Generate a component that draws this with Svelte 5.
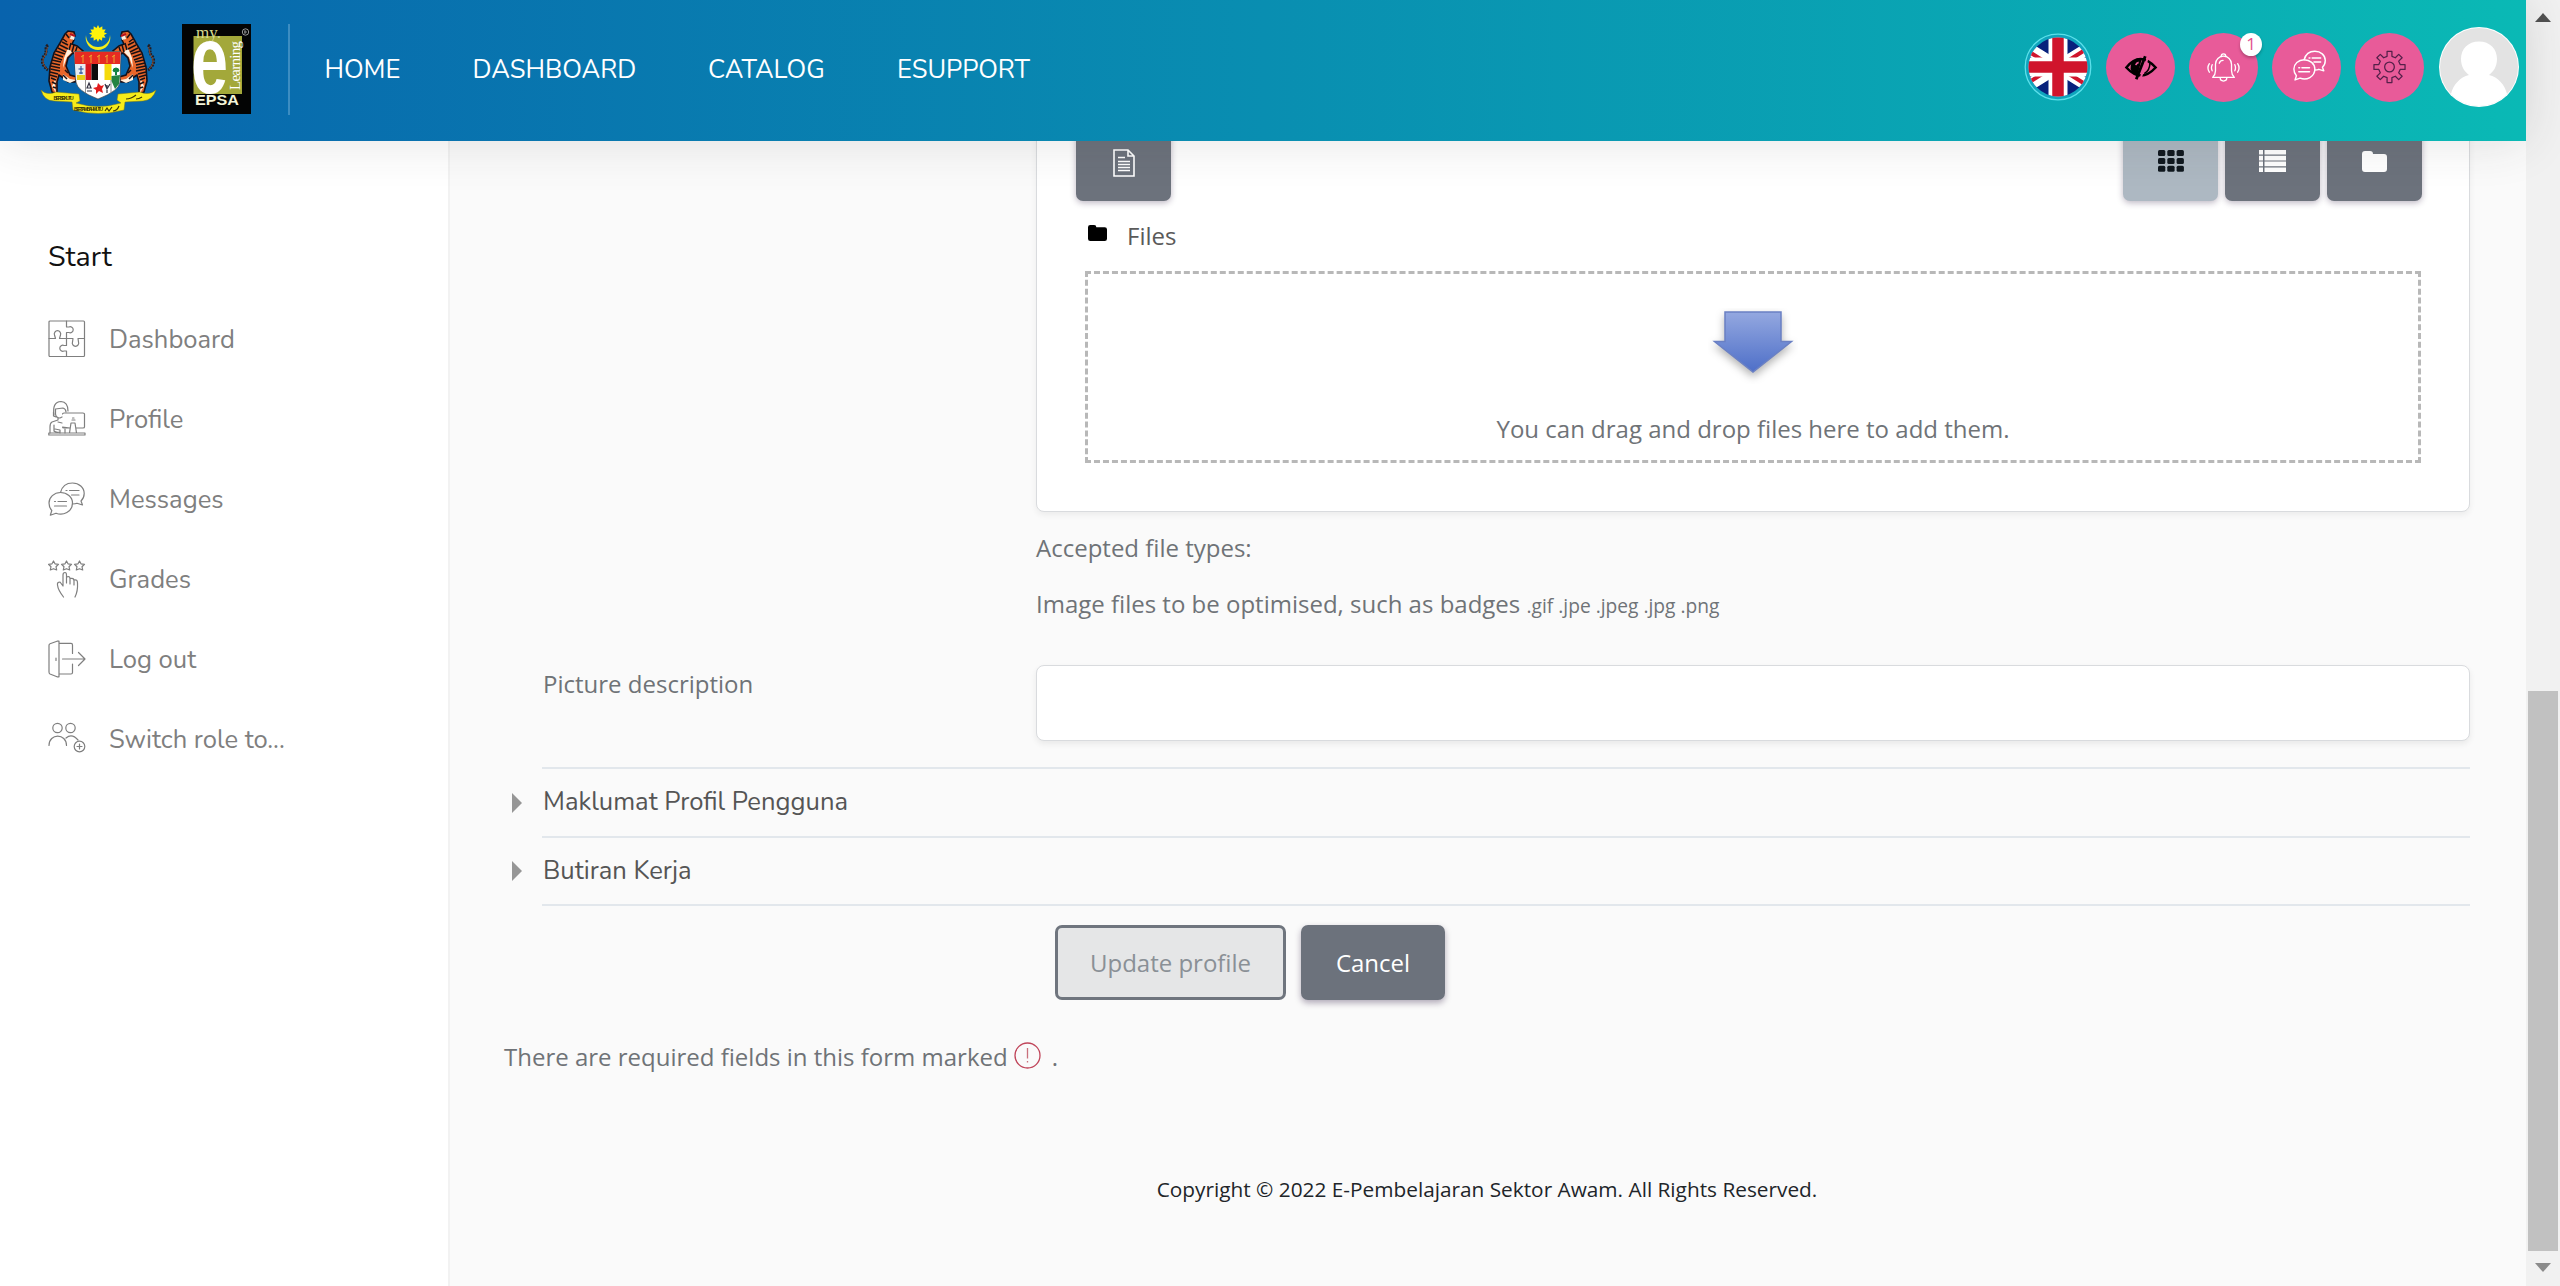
<script>
  const nav = [
    { label: 'HOME', cls: 'home' },
    { label: 'DASHBOARD', cls: 'dash' },
    { label: 'CATALOG', cls: 'cat' },
    { label: 'ESUPPORT', cls: 'esup' }
  ];
  const menu = ['Dashboard', 'Profile', 'Messages', 'Grades', 'Log out', 'Switch role to...'];
  const sections = ['Maklumat Profil Pengguna', 'Butiran Kerja'];
  const cells = [0, 1, 2, 3, 4, 5, 6, 7, 8];
</script>

{#snippet chat()}
  <path d="M12.5 10.5C14 4.500 18.500 1 24.500 1C31 1 36.200 5.500 36.200 11.500C36.200 15 34.800 17.300 33 19L34.500 23L29 21.300C27.500 22 26 22 24.500 22" />
  <path d="M12.500 10.500C6 10.500 1 15.500 1 21C1 24.500 2.300 26.800 3.800 28.500L2.300 33.200L8 31.200C15 34 24.500 30 24.500 21C24.500 15 19 10.500 12.500 10.500Z" />
  <path d="M21.500 8.500H31M18 8.500H19M23.500 13H31M10 19.500H18.500M6.500 19.500H7.500M6.500 24H18.500" />
{/snippet}

<div class="page">
  <div class="view">
    <header>
      <svg class="arms" viewBox="0 0 117 90" width="117" height="90">
        <path d="M46 11A12.300 12.300 0 1 0 70 11A11 11 0 1 1 46 11Z" fill="#f4ee18" />
        <path d="M58 1L59.500 4L62.300 2.200L62.400 5.400L65.700 5.400L64 8.200L67 9.500L64 11L65.500 13.800L62.300 13.600L62 16.700L59.300 15L58 18L56.500 15L53.700 16.700L53.500 13.600L50.300 13.800L52 11L49 9.500L52 8.200L50.400 5.400L53.600 5.400L53.700 2.200L56.500 4Z" fill="#fff20a" />
        {#each ['', 'translate(116 0) scale(-1 1)'] as side}
          <g transform={side}>
            <path d="M8 21C4 24 8 28 4 32C1 36 2 42 8 46" fill="none" stroke="#251c20" stroke-width="3" stroke-dasharray="2 1" />
            <path d="M8 23C5 27 8 29 4 33C2 37 3 41 7 45" fill="none" stroke="#8a4a2a" stroke-width="1" />
            <path d="M25 10L28 7L34 8L35 12L31 13L34 16L32 20L37 22L43 27L40 32L33 29L28 34L26 42L30 51L37 53L35 58L28 58L22 53L19 51L17 58L17 70L12 68L9 57L10 43L14 29L20 19Z" fill="#e8662a" stroke="#15111a" stroke-width="1.600" />
            <path d="M31 10L35 11L34 16L30 15ZM28 24L32 28L27 33L23 44L24 34ZM23 50L30 55L36 56L30 59L23 56ZM16 54L15 62L16 69L12 62Z" fill="#fff1df" />
            <path d="M23 15L27 18M22 18L28 21M20 21L28 25M18 24L26 28M16 27L25 30M14.500 30L23 33M13.500 33L22 36M12 36L21 38M11 39L20 41M10.500 42L20 44M10.500 45L20 47M10 48L18 50M10 51L17 53M11 54L16 56M12 58L16 60M13 63L16 64M26 10L29 14M31 19L29 26M34 21L32 28M37 23L35 29M25 46L28 49M23 51L27 55" stroke="#191114" stroke-width="1.500" />
            <path d="M30 10L35 12" stroke="#b5121c" stroke-width="2" />
          </g>
        {/each}
        <path d="M34 27.500H81L80 58Q79 67 58 75Q37 67 36 58Z" fill="#fff" stroke="#333" stroke-width=".6" />
        <path d="M34.500 28H80.500L80 40H35Z" fill="#e62b22" />
        <path d="M43 31V39M41 33L44 31M51 31V39M49 33L52 31M59 31V39M57 33L60 31M67 31V39M65 33L68 31M74 31V39M72 33L75 31" stroke="#eda52f" stroke-width="1" />
        <path d="M35 40H45.500V56H36Z" fill="#e7edf3" />
        <path d="M37 51H45V56H37Z" fill="#e8cd18" />
        <path d="M41 42V50M38.500 45H43.500M39 49H43" stroke="#1b4391" />
        <path d="M45.500 40H51.500V56H45.500Z" fill="#d7161d" />
        <path d="M51.500 40H58V56H51.500Z" fill="#0c0b0c" />
        <path d="M64.500 40H71.500V56H64.500Z" fill="#f5da0b" />
        <path d="M73 47A3 3 0 1 1 79 47L76.500 48V51H75.500V48Z" fill="#138240" stroke="#138240" />
        <path d="M71.500 52L80 51L79 60L75 65L71.500 57Z" fill="#248341" />
        <path d="M45.500 56V69M71 56V69" stroke="#666" stroke-width=".7" />
        <path d="M58 59L61 62L64 61L62 65L63 69L59 67L56 70L56 66L53 64L57 63Z" fill="#e21b1c" />
        <path d="M49 59L51 64H47ZM47 67H52M65 60L67 65L70 60M67 61V69" fill="none" stroke="#334" stroke-width="1.200" />
        <path d="M1 66Q7 72 16 68L39 70L40 77L36 79Q58 86 81 79L77 76L78 70L100 68Q109 72 116 66Q113 76 103 77L85 78L84 86Q58 93 33 86L32 78L14 77Q4 77 1 66Z" fill="#f7ec19" stroke="#7b7717" stroke-width=".5" />
        <text class="motto" x="13.500" y="75.500" textLength="20">BERSEKUTU</text>
        <text class="motto" x="34" y="87" textLength="29">BERTAMBAH MUTU</text>
        <path d="M65 87L67 84L69 87L72 83M73 87Q77 87 79 82M86 75Q91 75 96 71M96 75Q99 75 102 73" fill="none" stroke="#39350a" stroke-width="1.200" />
      </svg>

      <svg class="epsa" viewBox="0 0 69 90" width="69" height="90">
        <path d="M0 0H69V90H0Z" fill="#030404" />
        <path d="M11.500 12H60V70H11.500Z" fill="#a3a83a" />
        <text class="my" x="14" y="14" textLength="25">my.</text>
        <text class="big-e" x="9" y="69" textLength="37" lengthAdjust="spacingAndGlyphs">e</text>
        <text class="learning" transform="translate(57.500 66) rotate(-90)" textLength="49">Learning</text>
        <circle cx="63.500" cy="8" r="3.200" fill="none" stroke="#bbb" stroke-width=".8" />
        <path d="M63 6V10M62 8H65" stroke="#bbb" stroke-width=".7" />
        <text class="epsa-name" x="13" y="81" textLength="44" lengthAdjust="spacingAndGlyphs">EPSA</text>
      </svg>

      <div class="rule"></div>
      <nav>
        {#each nav as item}
          <a class={item.cls} href="#{item.cls}">{item.label}</a>
        {/each}
      </nav>

      <div class="tools">
        <svg class="flag" viewBox="0 0 68 68" width="68" height="68">
          <defs><clipPath id="disc"><circle cx="34" cy="34" r="29.500" /></clipPath></defs>
          <circle cx="34" cy="34" r="32.800" fill="#0fa5bd" stroke="#5ce0ea" stroke-width="1.300" />
          <g clip-path="url(#disc)">
            <path d="M0 0H68V68H0Z" fill="#08217c" />
            <path d="M-8 8L76 60M76 8L-8 60" stroke="#fff" stroke-width="12" />
            <path d="M-9 10L34 37M34 34L77 61M34 34L77 7M34 31L-9 58" stroke="#d0142c" stroke-width="4" />
            <path d="M34 0V68M0 34H68" stroke="#fff" stroke-width="19" />
            <path d="M34 0V68M0 34H68" stroke="#d0142c" stroke-width="11.500" />
          </g>
        </svg>

        <div class="round">
          <svg viewBox="0 0 36 28" width="34" height="27">
            <path d="M2.500 14Q17 -4 33.500 14Q18 31 2.500 14Z" fill="none" stroke="#000" stroke-width="2.600" />
            <path d="M19 4.500A9.500 9.500 0 0 0 14 23Z" fill="#000" />
            <path d="M22.500 2L13 26.500" stroke="#000" stroke-width="3" />
            <path d="M26 1.500L17 27" stroke="#eb5a9b" stroke-width="2.200" />
            <path d="M27.500 9Q27.500 17 21.500 20.500" fill="none" stroke="#000" stroke-width="1.600" />
            <path d="M12.500 11.500Q13 9 15.500 8.500" fill="none" stroke="#eb5a9b" stroke-width="1.800" />
          </svg>
        </div>
        <div class="round">
          <svg viewBox="0 0 35 33" width="33" height="33">
            <g fill="none" stroke="#fff" stroke-width="1.400" stroke-linejoin="round" stroke-linecap="round">
              <path d="M6 27H29Q26 24 26 20V13C26 8 22 4.500 17.500 4.500C13 4.500 9 8 9 13V20Q9 24 6 27Z" />
              <path d="M15 5A2.500 3 0 1 1 20 5M14 27.500C14 32 21 32 21 27.500M5.500 13.500Q4 17 5.500 20M2.500 12.500Q-.5 17 2.500 21.500M29.500 13.500Q31 17 29.500 20M32.500 12.500Q35.500 17 32.500 21.500M13 12Q14 9 17 9" />
            </g>
          </svg>
          <span class="badge">1</span>
        </div>
        <div class="round talk">
          <svg viewBox="0 0 37 34" width="33" height="31">
            <g class="line white">{@render chat()}</g>
          </svg>
        </div>
        <div class="round">
          <svg viewBox="0 0 34 34" width="33" height="34">
            <g fill="none" stroke="#55204a" stroke-width="1.300" stroke-linejoin="round">
              <path d="M14.500 1H19.500V6L23 7.500L26.500 4L30 7.500L26.500 11L28 14.500H33V19.500H28L26.500 23L30 26.500L26.500 30L23 26.500L19.500 28V33H14.500V28L11 26.500L7.500 30L4 26.500L7.500 23L6 19.500H1V14.500H6L7.500 11L4 7.500L7.500 4L11 7.500L14.500 6Z" />
              <circle cx="17" cy="17" r="5" />
            </g>
          </svg>
        </div>
        <svg class="avatar" viewBox="0 0 80 80" width="80" height="80">
          <defs><clipPath id="face"><circle cx="40" cy="40" r="39" /></clipPath></defs>
          <circle cx="40" cy="40" r="40" fill="#fff" />
          <g clip-path="url(#face)">
            <path d="M0 0H80V80H0Z" fill="#e3e3e3" />
            <path d="M40 14.500C51 14.500 58 22 58 32C58 40 54 45 50 48C59 50 66 58 68 67L80 68V80H0V68L12 67C14 58 21 50 30 48C26 45 22 40 22 32C22 22 29 14.500 40 14.500Z" fill="#fff" />
          </g>
        </svg>
      </div>
    </header>

    <div class="columns">
      <aside>
        <h2>Start</h2>
        {#each menu as label, i}
          <a class="entry" href="#menu">
            <svg viewBox="0 0 38 38" width="38" height="38">
              <g class="line">
                {#if i === 0}
                  <rect x="1" y="1" width="35.500" height="35.500" rx="1" />
                  <path d="M18.500 1V7H21A3 3 0 1 1 21 12.500H18.500V25.500H16A3 3 0 1 0 16 31H18.500V36.500M1 18.500H7.500L6.500 15A3.200 3.200 0 1 1 12.500 15L11.500 18.500H25L24.500 22A3.200 3.200 0 1 0 30.500 22L30 18.500H36.500" />
                {:else if i === 1}
                  <path d="M6 15Q4 2 13 1.500Q20 2 20 11M7.500 9L15 8Q18 9 18 12M7.500 9V14Q8 18 12 18L14 17M5.500 12V16L8 17M10 18V20L4 22Q2 23 2 27V33M6 25V31Q8 33 12 32V30L7 29M14 23L10 22M12 32V33M17 29V33" />
                  <path d="M14.500 14Q14.500 13 16 13H35Q36.500 13 36.500 14V27Q36.500 28 35 28H28M22 28H16Q14.500 28 14.500 27ZM21.500 33L23 23H27L28.500 33M24.500 18H26M24 20H27M.800 33H37V35H.800Z" />
                {:else if i === 2}
                  <g transform="translate(0 2)">{@render chat()}</g>
                {:else if i === 3}
                  {#each [5.5, 18.5, 31.5] as x}
                    <path transform="translate({x} 5.500)" d="M0 -4.500L1.500 -1.700L5 -1.200L2.500 1.200L3.200 4.500L0 3.200L-3.200 4.500L-2.500 1.200L-5 -1.200L-1.500 -1.700Z" />
                  {/each}
                  <path d="M15.500 37Q10 30 9.500 25Q9 22 12 22L15 26V15Q15 12.500 17 12.500Q18.500 12.500 18.500 15V23M18.500 17Q22 15.500 22 19V24M22 18.500Q26 17.500 26 21V25M26 20Q29.500 19 29.500 23Q30 31 27 37" />
                {:else if i === 4}
                  <path d="M1 5.500Q1 4 2 3.700L9 1.200H11V36.800H9L2 34Q1 33.500 1 32ZM11 3.300H23Q24.500 3.300 24.500 5V13.500M24.500 24V32.500Q24.500 34 23 34H11M14.500 19H37M30.500 12.500L37 19L30.500 25.500M8 18V20.500" />
                {:else}
                  <circle cx="9.500" cy="8" r="4.700" />
                  <circle cx="22.500" cy="8" r="4.700" />
                  <path d="M1 25.500C1 13 18.500 13 18.500 25.500M18 18Q24 13 30 20" />
                  <circle cx="31.500" cy="26.500" r="5.300" />
                  <path d="M31.500 24V29M29 26.500H34" />
                {/if}
              </g>
            </svg>
            <span>{label}</span>
          </a>
        {/each}
      </aside>

      <main>
        <div class="field">
          <div class="card">
            <div class="toolbar">
              <button class="dark add" aria-label="Add">
                <svg viewBox="0 0 22 28" width="22" height="28">
                  <path d="M1 1H15L21 7V27H1ZM15 1V7H21" fill="none" stroke="#fff" stroke-width="1.600" />
                  <path d="M5 8.500H12M5 12.500H17M5 15.500H17M5 18.500H17M5 21.500H17" stroke="#fff" stroke-width="1.500" />
                </svg>
              </button>
              <div class="views">
                <button class="active" aria-label="Icons">
                  <svg viewBox="0 0 26 22" width="26" height="22">
                    {#each cells as c}
                      <rect x={(c % 3) * 9.3} y={Math.floor(c / 3) * 7.9} width="7.300" height="6" rx="1.500" fill="#10181f" />
                    {/each}
                  </svg>
                </button>
                <button class="dark" aria-label="List">
                  <svg viewBox="0 0 27 22" width="27" height="22">
                    <path d="M0 0H4V4.600H0ZM5.500 0H27V4.600H5.500ZM0 5.800H4V10.400H0ZM5.500 5.800H27V10.400H5.500ZM0 11.600H4V16.200H0ZM5.500 11.600H27V16.200H5.500ZM0 17.400H4V22H0ZM5.500 17.400H27V22H5.500Z" fill="#fff" />
                  </svg>
                </button>
                <button class="dark" aria-label="Tree">
                  <svg viewBox="0 0 25 21" width="25" height="21">
                    <path d="M0 3Q0 0 3 0H8Q11 0 11 3H22Q25 3 25 6V18Q25 21 22 21H3Q0 21 0 18Z" fill="#fff" />
                  </svg>
                </button>
              </div>
            </div>
            <div class="path">
              <svg viewBox="0 0 25 21" width="19" height="16">
                <path d="M0 3Q0 0 3 0H8Q11 0 11 3H22Q25 3 25 6V18Q25 21 22 21H3Q0 21 0 18Z" fill="#000" />
              </svg>
              <span>Files</span>
            </div>
            <div class="drop">
              <svg viewBox="0 0 90 76" width="90" height="76">
                <defs>
                  <linearGradient id="blue" x1="0" y1="0" x2="0" y2="1">
                    <stop offset="0" stop-color="#94a8e0" />
                    <stop offset="1" stop-color="#4e6fc8" />
                  </linearGradient>
                </defs>
                <path class="arrow" d="M17 4H73V33.500H83.500L45 64L6.500 33.500H17Z" fill="url(#blue)" stroke="#6a80c4" stroke-width="1.500" />
              </svg>
              <p>You can drag and drop files here to add them.</p>
            </div>
          </div>
          <p class="accepted">Accepted file types:</p>
          <p class="types">Image files to be optimised, such as badges <small>.gif .jpe .jpeg .jpg .png</small></p>
        </div>

        <div class="describe">
          <label for="desc">Picture description</label>
          <input id="desc" type="text" />
        </div>

        <div class="sections">
          {#each sections as name, i}
            <div class="section s{i}"><i></i><span>{name}</span></div>
          {/each}
        </div>

        <div class="actions">
          <button class="update">Update profile</button>
          <button class="cancel">Cancel</button>
        </div>

        <p class="required">
          <span>There are required fields in this form marked</span>
          <svg viewBox="0 0 27 27" width="27" height="27">
            <circle cx="13.500" cy="13.500" r="12.500" fill="none" stroke="#c0455a" stroke-width="1.300" />
            <path d="M13.500 6V16.500M13.500 19V20.500" stroke="#c9707c" stroke-width="1.300" />
          </svg>
          <span>.</span>
        </p>

        <footer>Copyright © 2022 E-Pembelajaran Sektor Awam. All Rights Reserved.</footer>
      </main>
    </div>
  </div>

  <div class="scroll">
    <i class="up"></i>
    <div class="thumb"></div>
    <i class="down"></i>
  </div>
</div>

<style>
  :global(body) { margin: 0; overflow: hidden; }
  * { box-sizing: border-box; }
  p, h2 { margin: 0; }
  a { text-decoration: none; color: inherit; }
  svg { display: block; flex: none; }
  .page { display: flex; width: 2560px; height: 1286px; overflow: hidden; font-family: 'Open Sans', sans-serif; font-size: 24px; color: #6f7377; background: #fafafa; }
  .view { flex: 1; display: flex; flex-direction: column; min-width: 0; }
  header { height: 141px; flex: none; display: flex; align-items: flex-start; padding: 24px 7px 0 40px; position: relative; z-index: 2; background: linear-gradient(90deg, #0863ad 0%, #0ab9b5 100%); box-shadow: 0 0 50px rgba(50, 50, 50, 0.14); }
  .epsa { margin-left: 24.500px; overflow: visible; }
  .rule { width: 2px; height: 91px; margin-left: 37px; background: #3c8dc2; }
  .motto { font: bold 5px 'Liberation Sans', sans-serif; fill: #39350a; }
  .my { font: 17px 'Liberation Serif', serif; fill: #d6d98d; }
  .big-e { font: bold 96px 'Liberation Sans', sans-serif; fill: #fff; }
  .learning { font: 15px 'Liberation Serif', serif; fill: #fff; }
  .epsa-name { font: bold 14px 'Liberation Sans', sans-serif; fill: #f4f5d8; }

  nav { display: flex; margin-left: 35px; height: 91px; align-items: center; font-family: Nunito, Lato, sans-serif; font-size: 25.600px; color: #fff; white-space: nowrap; }
  nav a { display: block; line-height: 36px; }
  .home { width: 148px; }
  .dash { width: 235.500px; }
  .cat { width: 189px; }

  .tools { display: flex; align-items: center; margin: 3px 0 0 auto; height: 80px; }
  .round { position: relative; width: 69px; height: 69px; margin-left: 14px; border-radius: 50%; background: #e85b99; display: flex; align-items: center; justify-content: center; }
  .talk { padding: 0 0 4px 5px; }
  .badge { position: absolute; right: -4px; top: 0; width: 22px; height: 23px; border-radius: 50%; background: #fff; color: #e14f8e; font-size: 17px; line-height: 22px; text-align: center; box-shadow: 0 2px 3px rgba(0, 0, 0, 0.25); }
  .avatar { margin-left: 15px; }
  .line { fill: none; stroke: #7f7f7f; stroke-width: 1.2; stroke-linejoin: round; stroke-linecap: round; }
  .white { stroke: #fff; stroke-width: 1.600; }

  .columns { flex: 1; display: flex; min-height: 0; }
  aside { width: 450px; flex: none; background: #fff; border-right: 2px solid #f2f2f2; padding: 96px 0 0 48px; font-family: Nunito, Lato, sans-serif; }
  h2 { font-weight: 400; font-size: 28.600px; line-height: 40px; height: 62px; color: #111; }
  .entry { display: flex; align-items: center; gap: 23px; height: 80px; font-size: 25.600px; color: #7f7f7f; white-space: nowrap; }

  main { flex: 1; min-width: 0; padding: 0 56px 0 54px; overflow: hidden; }
  .field { margin-left: 532px; }
  .card { height: 411px; margin-top: -40px; padding: 24px 47px 0 39px; background: #fff; border: 1px solid #d9dbde; border-radius: 8px; box-shadow: 0 3px 6px rgba(0, 0, 0, 0.06); }
  .toolbar { display: flex; justify-content: space-between; height: 76px; }
  .toolbar button { width: 95px; height: 75px; padding: 0 0 5px; border: 0; border-radius: 7px; display: flex; align-items: center; justify-content: center; box-shadow: 0 2px 6px rgba(40, 20, 60, 0.3); }
  .toolbar .add { padding-bottom: 2px; }
  .dark { background: #6c727c; }
  .active { background: #adb8c2; }
  .views { display: flex; gap: 7px; }
  .path { display: flex; align-items: center; gap: 20px; height: 69px; padding: 0 0 2px 12px; color: #5a5a5a; }
  .path svg { margin-top: -5px; }
  .drop { height: 192px; width: 1336px; margin-left: 9px; border: 3px dashed #b8b8b8; display: flex; flex-direction: column; align-items: center; padding-top: 34px; }
  .arrow { filter: drop-shadow(0 4px 4px rgba(0, 0, 0, 0.3)); }
  .drop p { line-height: 36px; margin-top: 27px; }
  .accepted { margin-top: 18px; line-height: 36px; }
  .types { margin-top: 20px; line-height: 36px; }
  small { font-size: 19.200px; }

  .describe { display: flex; margin: 41px 0 0 39px; }
  label { width: 493px; line-height: 36px; padding-top: 1px; }
  input { flex: 1; height: 76px; border: 1px solid #d9dbde; border-radius: 8px; background: #fff; box-shadow: 0 3px 6px rgba(0, 0, 0, 0.07); }
  .sections { margin: 26px 0 0 38px; border-top: 2px solid #e2e7ec; }
  .section { height: 69px; border-bottom: 2px solid #e2e7ec; display: flex; align-items: center; padding-bottom: 2px; font-family: Nunito, Lato, sans-serif; font-size: 25.600px; color: #555; }
  .section i { width: 0; height: 0; margin: 2px 21px 0 -30px; border: 10px solid transparent; border-left-color: #969696; border-right: 0; }
  .s1 { height: 68px; }
  .actions { display: flex; gap: 15px; margin: 19px 0 0 551px; }
  .update, .cancel { height: 75px; border-radius: 7px; font: 24px 'Open Sans', sans-serif; padding: 0; }
  .update { width: 231px; border: 3px solid #6f757e; background: #e5e6e7; color: #8a9096; }
  .cancel { width: 144px; border: 0; background: #6c727c; color: #fff; box-shadow: 0 3px 6px rgba(40, 20, 60, 0.35); }
  .required { display: flex; align-items: center; gap: 6px; height: 36px; margin-top: 38px; }
  .required svg { margin-top: -2px; }
  .required span:last-child { margin-left: 5px; }
  footer { margin-top: 99px; text-align: center; font-size: 20.800px; line-height: 32px; color: #212529; }

  .scroll { width: 34px; flex: none; background: #f1f1f1; display: flex; flex-direction: column; padding: 13px 2px 14px; }
  .scroll i { width: 0; height: 0; border: 8px solid transparent; align-self: center; }
  .scroll .up { border-top: 0; border-bottom: 9px solid #505050; }
  .thumb { height: 561px; margin: 669px 0 12px; background: #c1c1c1; }
  .scroll .down { border-bottom: 0; border-top: 9px solid #8b8b8b; }
</style>
